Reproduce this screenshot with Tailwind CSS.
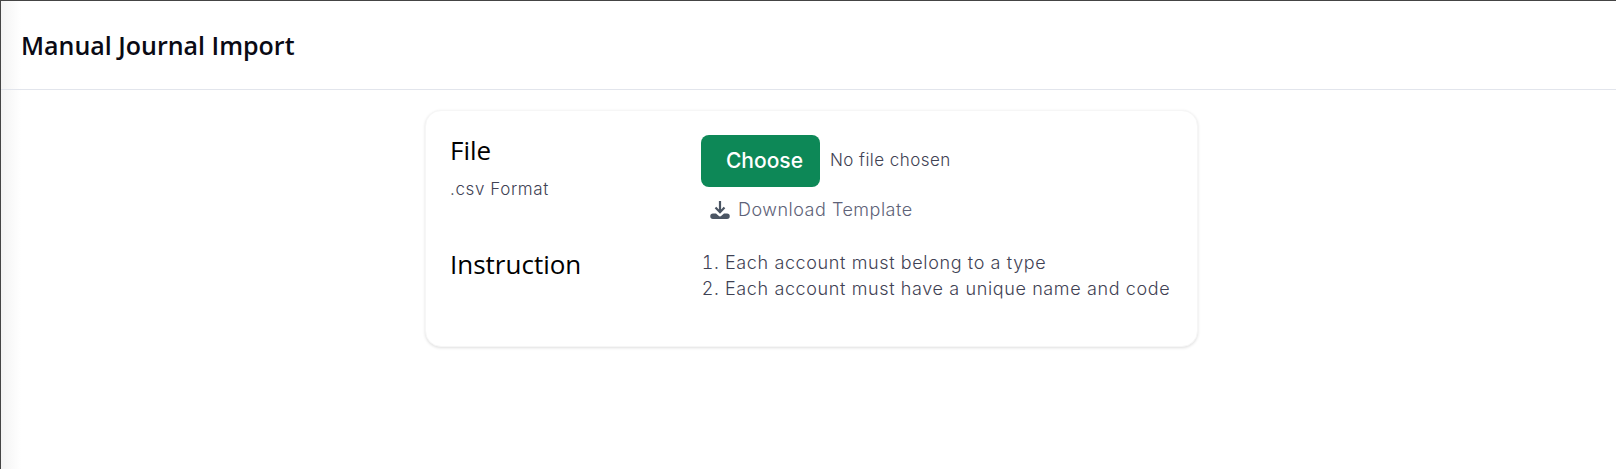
<!DOCTYPE html>
<html lang="en">
  <head>
    <meta charset="UTF-8" />
    <meta name="viewport" content="width=device-width, initial-scale=1.0" />
    <script src="https://cdn.jsdelivr.net/npm/@tailwindcss/browser@4"></script>
    <title>Manual Journal Import</title>
  </head>
  <body class="bg-white">
    <div class="h-[469px] overflow-hidden border-t border-l border-[#444] bg-[linear-gradient(90deg,#f3f3f3,#ffffff_20px)] font-['Open_Sans',sans-serif]">
      <header class="h-[89px] flex items-center pl-[20px] pt-[2px] border-b border-[#e2e5ec]">
        <h1 class="text-[25px] font-semibold text-[#0a0a14]">Manual Journal Import</h1>
      </header>
      <main class="flex justify-center pl-[6px] pt-[20px]">
        <section class="w-[773px] h-[237px] bg-white rounded-[16px] border border-[#f6f6f6] shadow-[0_1px_3px_rgba(0,0,0,0.13)] pl-[24px] pt-[23px]">
          <div class="flex">
            <div class="w-[251px]">
              <h2 class="text-[26px] leading-[32px] text-black">File</h2>
              <p class="mt-[11px] text-[17px] leading-[24px] font-light text-[#3f4254] font-['Inter',sans-serif] tracking-[0.6px]">.csv Format</p>
            </div>
            <div>
              <div class="flex items-center mt-[1px]">
                <button class="w-[119px] h-[52px] pl-[8px] rounded-[8px] bg-[#0d8857] text-white text-[21px] font-medium font-['Inter',sans-serif]">Choose</button>
                <span class="ml-[10px] text-[17px] font-light text-[#3f4254] font-['Inter',sans-serif] tracking-[0.45px]">No file chosen</span>
              </div>
              <a class="flex items-center mt-[11px] ml-[9px] text-[18px] leading-[24px] font-light text-[#5e6278] font-['Inter',sans-serif] tracking-[0.5px]">
                <svg class="w-[20px] h-[20px] mr-[8px]" viewBox="0 0 20 20" fill="#4b5563">
                  <path d="M10 1v11M5.500 7.500l4.500 4.700 4.500-4.700" fill="none" stroke="#4b5563" stroke-width="2.200" />
                  <path d="M3 13.500h3l2.600 2.300a2 2 0 0 0 2.800 0l2.600-2.300h3a2.500 2.500 0 0 1 0 5.500H3a2.500 2.500 0 0 1 0-5.500z" />
                </svg>
                Download Template
              </a>
            </div>
          </div>
          <div class="flex mt-[26px]">
            <h2 class="w-[251px] text-[26px] leading-[32px] text-black">Instruction</h2>
            <ol class="list-decimal pl-[24px] pt-[2px] text-[18px] leading-[26px] font-light text-[#3f4254] font-['Inter',sans-serif] tracking-[0.62px]">
              <li>Each account must belong to a type</li>
              <li>Each account must have a unique name and code</li>
            </ol>
          </div>
        </section>
      </main>
    </div>
  </body>
</html>
